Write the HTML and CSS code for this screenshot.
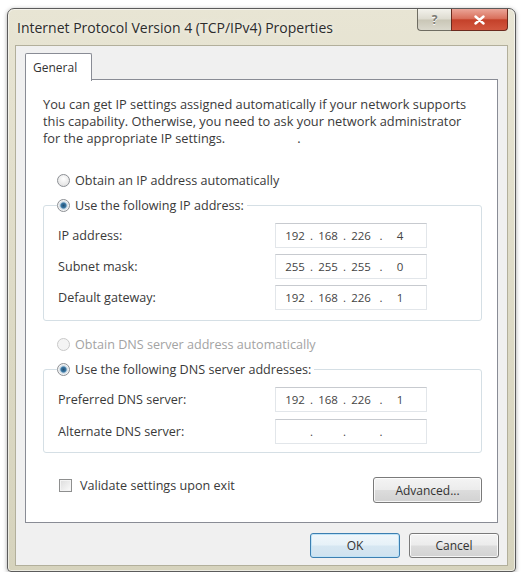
FILE: index.html
```html
<!DOCTYPE html>
<html lang="en">
<head>
    <meta charset="UTF-8">
    <title>Internet Protocol Version 4 (TCP/IPv4) Properties</title>
    <link rel="stylesheet" href="styles.css">
</head>
<body>
    <div class="window">
        <div class="titlebar">
            <span class="title">Internet Protocol Version 4 (TCP/IPv4) Properties</span>
            <div class="caption-buttons">
                <span class="cap help">?</span>
                <span class="cap close">
                    <svg width="11" height="10" viewBox="0 0 11 10">
                        <path d="M1.5 1.5 L9.5 8.5 M9.5 1.5 L1.5 8.5" stroke="#fff" stroke-width="2.4" stroke-linecap="round"/>
                    </svg>
                </span>
            </div>
        </div>

        <div class="client">
            <div class="tabs"><span class="tab">General</span></div>
            <div class="panel">
                <p class="intro">You can get IP settings assigned automatically if your network supports<br>
                this capability. Otherwise, you need to ask your network administrator<br>
                for the appropriate IP settings.<span class="speck">.</span></p>

                <div class="option first"><span class="radio"></span>Obtain an IP address automatically</div>
                <fieldset class="group">
                    <legend><span class="radio checked"></span>Use the following IP address:</legend>
                    <div class="field-row">
                        <span>IP address:</span>
                        <div class="ip"><span>192</span><i>.</i><span>168</span><i>.</i><span>226</span><i>.</i><span>4</span></div>
                    </div>
                    <div class="field-row">
                        <span>Subnet mask:</span>
                        <div class="ip"><span>255</span><i>.</i><span>255</span><i>.</i><span>255</span><i>.</i><span>0</span></div>
                    </div>
                    <div class="field-row">
                        <span>Default gateway:</span>
                        <div class="ip"><span>192</span><i>.</i><span>168</span><i>.</i><span>226</span><i>.</i><span>1</span></div>
                    </div>
                </fieldset>

                <div class="option second disabled"><span class="radio"></span>Obtain DNS server address automatically</div>
                <fieldset class="group dns">
                    <legend><span class="radio checked"></span>Use the following DNS server addresses:</legend>
                    <div class="field-row">
                        <span>Preferred DNS server:</span>
                        <div class="ip"><span>192</span><i>.</i><span>168</span><i>.</i><span>226</span><i>.</i><span>1</span></div>
                    </div>
                    <div class="field-row">
                        <span>Alternate DNS server:</span>
                        <div class="ip"><span></span><i>.</i><span></span><i>.</i><span></span><i>.</i><span></span></div>
                    </div>
                </fieldset>

                <div class="check-row">
                    <label class="check"><span class="checkbox"></span>Validate settings upon exit</label>
                    <button class="btn advanced">Advanced...</button>
                </div>
            </div>

            <div class="dialog-buttons">
                <button class="btn default">OK</button>
                <button class="btn">Cancel</button>
            </div>
        </div>
    </div>
</body>
</html>
```

FILE: styles.css
```css
body {
    margin: 0;
    background-color: #fff;
    font-family: "Open Sans", "Noto Sans", Arial, sans-serif;
    font-size: 12.6px;
    color: #3a3a3a;
}
.window {
    width: 507px;
    height: 562px;
    margin: 8px 0 0 7px;
    border: 1px solid #5b5b5b;
    border-radius: 7px 7px 4px 4px;
    background: linear-gradient(#e8e5d4, #dcd9c4 60%, #d6d3bd);
    box-shadow: 0 1px 4px rgba(0, 0, 0, 0.35), inset 0 0 0 1px rgba(255, 255, 255, 0.55);
    display: flex;
    flex-direction: column;
}
.titlebar {
    height: 36px;
    display: flex;
    justify-content: space-between;
    padding: 0 7px 0 9px;
}
.title {
    font-size: 14px;
    color: #2c2c2c;
    line-height: 38px;
    text-shadow: 0 0 6px rgba(255, 255, 255, 0.9);
}
.caption-buttons {
    display: flex;
    align-self: flex-start;
}
.cap {
    height: 21px;
    display: flex;
    align-items: center;
    justify-content: center;
    border: 1px solid #6f6d62;
    border-top: none;
}
.help {
    width: 33px;
    border-radius: 0 0 0 4px;
    border-right: none;
    background: linear-gradient(#f3f2ec, #dddbd0 48%, #c9c6b6 52%, #dad8cc);
    color: #7a7a74;
    font-weight: bold;
    font-size: 12px;
    text-shadow: 0 1px 0 #fff;
}
.close {
    width: 55px;
    border-color: #6b2a1e;
    border-radius: 0 0 4px 0;
    background: linear-gradient(#eba598, #d9705c 45%, #c4412a 52%, #d2573f);
}
.client {
    flex: 1;
    margin: 0 7px 6px;
    border: 1px solid #b2af9b;
    background-color: #f0f0f0;
    padding: 7px 9px 7px 9px;
}
.tabs {
    height: 26px;
}
.tab {
    position: relative;
    z-index: 1;
    display: inline-block;
    height: 27px;
    line-height: 27px;
    padding: 0 14px 0 7px;
    border: 1px solid #898c95;
    border-bottom: none;
    border-radius: 2px 2px 0 0;
    background-color: #fff;
    color: #333;
    font-size: 12px;
}
.panel {
    border: 1px solid #898c95;
    background-color: #fff;
    padding: 16px 15px 19px 17px;
}
.intro {
    margin: 0;
    line-height: 17px;
    font-size: 12.8px;
}
.speck {
    padding-left: 72px;
}
.option {
    display: flex;
    align-items: center;
    height: 16px;
    margin-left: 14px;
}
.option.first {
    margin-top: 25px;
}
.option.second {
    margin-top: 15px;
}
.disabled {
    color: #a3a3a3;
}
.radio {
    width: 11px;
    height: 11px;
    margin-right: 5px;
    border: 1px solid #8c8f94;
    border-radius: 50%;
    background: radial-gradient(circle at 50% 35%, #fff, #dcdcdc);
    display: inline-block;
    flex-shrink: 0;
    box-sizing: content-box;
}
.radio.checked {
    background: radial-gradient(circle, #254f72 0, #3a79a6 2.5px, #c9d8e4 3.6px, #f4f4f4 5px);
}
.disabled .radio {
    border-color: #c9c9c9;
    background: #f4f4f4;
}
.group {
    margin: 9px 0 0 0;
    padding: 0 54px 10px 14px;
    border: 1px solid #d5dfe5;
    border-radius: 3px;
    min-inline-size: 0;
}
.group.dns {
    padding-bottom: 8px;
}
.group legend {
    display: flex;
    align-items: center;
    height: 16px;
    padding: 0 3px 0 0;
    margin-left: -1px;
}
.field-row {
    display: flex;
    justify-content: space-between;
    align-items: center;
    height: 25px;
    margin-top: 6px;
}
.dns .field-row {
    margin-top: 7px;
}
.field-row:first-of-type {
    margin-top: 10px;
}
.ip {
    border: 1px solid #e2e6ea;
    border-top-color: #c7cacf;
    display: grid;
    grid-template-columns: 26px 7px 26px 7px 26px 14px 24px;
    align-items: center;
    padding-left: 6px;
    box-sizing: border-box;
    width: 152px;
    height: 25px;
    font-size: 11.5px;
    color: #444;
}
.ip span {
    text-align: center;
}
.ip i {
    font-style: normal;
    text-align: center;
}
.check-row {
    display: flex;
    justify-content: space-between;
    align-items: center;
    width: 439px;
    margin-top: 24px;
}
.check {
    display: flex;
    align-items: center;
    margin-left: 16px;
    margin-top: -10px;
}
.checkbox {
    width: 11px;
    height: 11px;
    margin-right: 8px;
    border: 1px solid #8e8f8f;
    background: linear-gradient(135deg, #dcdcdc, #fbfbfb);
    box-shadow: inset 0 0 0 1px #f4f4f4;
}
.btn {
    font-family: inherit;
    font-size: 12px;
    color: #333;
    height: 26px;
    padding: 0;
    border: 1px solid #7a7a7a;
    border-radius: 3px;
    background: linear-gradient(#f4f4f4, #ececec 48%, #dcdcdc 52%, #d2d2d2);
    box-shadow: inset 0 0 0 1px rgba(255, 255, 255, 0.8);
}
.advanced {
    width: 109px;
}
.dialog-buttons {
    display: flex;
    justify-content: flex-end;
    gap: 9px;
    margin-top: 10px;
    margin-right: -1px;
}
.dialog-buttons .btn {
    width: 90px;
    height: 25px;
}
.btn.default {
    border-color: #3c7fb1;
    background: linear-gradient(#f0f7fb, #e6f1f8 48%, #d6e7f2 52%, #cfe2ef);
    box-shadow: inset 0 0 0 1px #bfe3f7;
}
```
